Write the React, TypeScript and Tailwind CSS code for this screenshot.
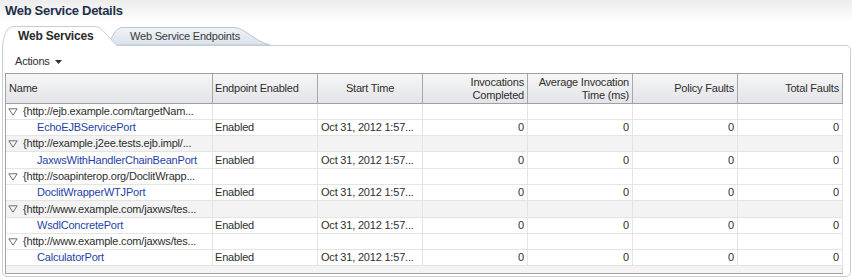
import React from 'react'

interface Group {
  ns: string
  port: string
}

const groups: Group[] = [
  { ns: '{http://ejb.example.com/targetNam...', port: 'EchoEJBServicePort' },
  { ns: '{http://example.j2ee.tests.ejb.impl/...', port: 'JaxwsWithHandlerChainBeanPort' },
  { ns: '{http://soapinterop.org/DoclitWrapp...', port: 'DoclitWrapperWTJPort' },
  { ns: '{http://www.example.com/jaxws/tes...', port: 'WsdlConcretePort' },
  { ns: '{http://www.example.com/jaxws/tes...', port: 'CalculatorPort' },
]

const cols = 'grid grid-cols-[207px_105px_105px_105px_105px_105px_105px]'
const cell = 'border-r border-b border-[#e4e4e4] flex items-center overflow-hidden whitespace-nowrap'

function Triangle() {
  return (
    <svg width="10" height="8" viewBox="0 0 10 8" className="shrink-0">
      <polygon points="0.8,0.8 9.2,0.8 5,7.2" fill="none" stroke="#6f6f6f" strokeWidth="1" />
    </svg>
  )
}

export default function App() {
  return (
    <div className="w-[852px] h-[280px] bg-white text-[11px] text-[#2e2e2e] font-['Liberation_Sans',Arial,sans-serif] tracking-[-0.2px] overflow-hidden">
      {/* Title */}
      <div className="h-[22px] flex items-center px-[5px] bg-gradient-to-b from-[#ececec] to-white">
        <h1 className="text-[13px] font-bold text-[#223049] tracking-[-0.3px]">Web Service Details</h1>
      </div>

      {/* Tabs */}
      <div className="h-[24px] ml-[2px] flex items-end relative z-10 -mb-px">
        <div className="relative z-10 w-[116px] h-[20px] flex items-center pl-[16px]">
          <svg className="absolute inset-0" width="116" height="20" viewBox="0 0 116 20">
            <path d="M0.5 20 C2 10 4 0.5 12 0.5 L93 0.5 C101 0.5 105 12 115.5 20 Z" fill="#ffffff" stroke="none" />
            <path d="M0.5 20 C2 10 4 0.5 12 0.5 L93 0.5 C101 0.5 105 12 115.5 19.5" fill="none" stroke="#c5cfdb" />
          </svg>
          <span className="relative font-bold text-[12px] text-[#2b2b2b]">Web Services</span>
        </div>
        <div className="relative w-[162px] h-[18px] -ml-[10px] mb-px flex items-center pl-[22px]">
          <svg className="absolute inset-0" width="162" height="18" viewBox="0 0 162 18">
            <defs>
              <linearGradient id="tabg" x1="0" y1="0" x2="0" y2="1">
                <stop offset="0" stopColor="#f1f4f8" />
                <stop offset="1" stopColor="#dbe2eb" />
              </linearGradient>
            </defs>
            <path d="M0 18 C5 9 7 0.5 15 0.5 L126 0.5 C136 0.5 146 14 162 18 Z" fill="url(#tabg)" stroke="#b9c5d3" />
          </svg>
          <span className="relative text-[#3a3a3a]">Web Service Endpoints</span>
        </div>
      </div>

      {/* Panel */}
      <div className="ml-[2px] w-[849px] h-[232px] border border-[#c5cfdb] rounded-[5px] rounded-tl-none bg-white">
        <div className="mt-[7px] h-[16px] flex items-center pl-[12px]">
          <span>Actions</span>
          <svg width="7" height="4" viewBox="0 0 7 4" className="ml-[5px] mt-px">
            <polygon points="0,0 7,0 3.5,4" fill="#333" />
          </svg>
        </div>

        <div className="mt-[4px] ml-[2px] w-[838px] border-l border-b border-[#a3a3a3]">
          {/* Header */}
          <div className={`${cols} h-[31px] border-t border-b border-[#a0a0a0] bg-gradient-to-b from-[#f6f6f7] to-[#e3e4e8] leading-[13px]`}>
            <div className="border-r border-[#a8a8a8] flex items-center pl-[3px]">Name</div>
            <div className="border-r border-[#a8a8a8] flex items-center pl-[2px]">Endpoint Enabled</div>
            <div className="border-r border-[#a8a8a8] flex items-center justify-center">Start Time</div>
            <div className="border-r border-[#a8a8a8] flex items-center justify-end text-right pr-[3px]">
              Invocations
              <br />
              Completed
            </div>
            <div className="border-r border-[#a8a8a8] flex items-center justify-end text-right pr-[3px]">
              Average Invocation
              <br />
              Time (ms)
            </div>
            <div className="border-r border-[#a8a8a8] flex items-center justify-end pr-[3px]">Policy Faults</div>
            <div className="border-r border-[#a8a8a8] flex items-center justify-end pr-[3px]">Total Faults</div>
          </div>

          {/* Rows */}
          {groups.map((g, i) => {
            const bg = i % 2 === 1 ? 'bg-[#f3f3f3]' : 'bg-white'
            const groupH = i === 3 ? 'h-[17px]' : 'h-[16px]'
            const dataH = i === 1 ? 'h-[17px]' : 'h-[16px]'
            return (
              <React.Fragment key={i}>
                <div className={`${cols} ${groupH} ${bg}`}>
                  <div className={`${cell} pl-[2px] gap-[5px]`}>
                    <Triangle />
                    <span>{g.ns}</span>
                  </div>
                  <div className={cell} />
                  <div className={cell} />
                  <div className={cell} />
                  <div className={cell} />
                  <div className={cell} />
                  <div className={cell} />
                </div>
                <div className={`${cols} ${dataH} bg-white`}>
                  <div className={`${cell} pl-[31px] text-[#1f3fa6]`}>{g.port}</div>
                  <div className={`${cell} pl-[2px]`}>Enabled</div>
                  <div className={`${cell} pl-[3px]`}>Oct 31, 2012 1:57...</div>
                  <div className={`${cell} justify-end pr-[3px]`}>0</div>
                  <div className={`${cell} justify-end pr-[3px]`}>0</div>
                  <div className={`${cell} justify-end pr-[3px]`}>0</div>
                  <div className={`${cell} justify-end pr-[3px]`}>0</div>
                </div>
              </React.Fragment>
            )
          })}

          <div className="h-[7px] bg-[#f4f4f4] border-r border-[#d6d6d6]" />
        </div>
      </div>
    </div>
  )
}
